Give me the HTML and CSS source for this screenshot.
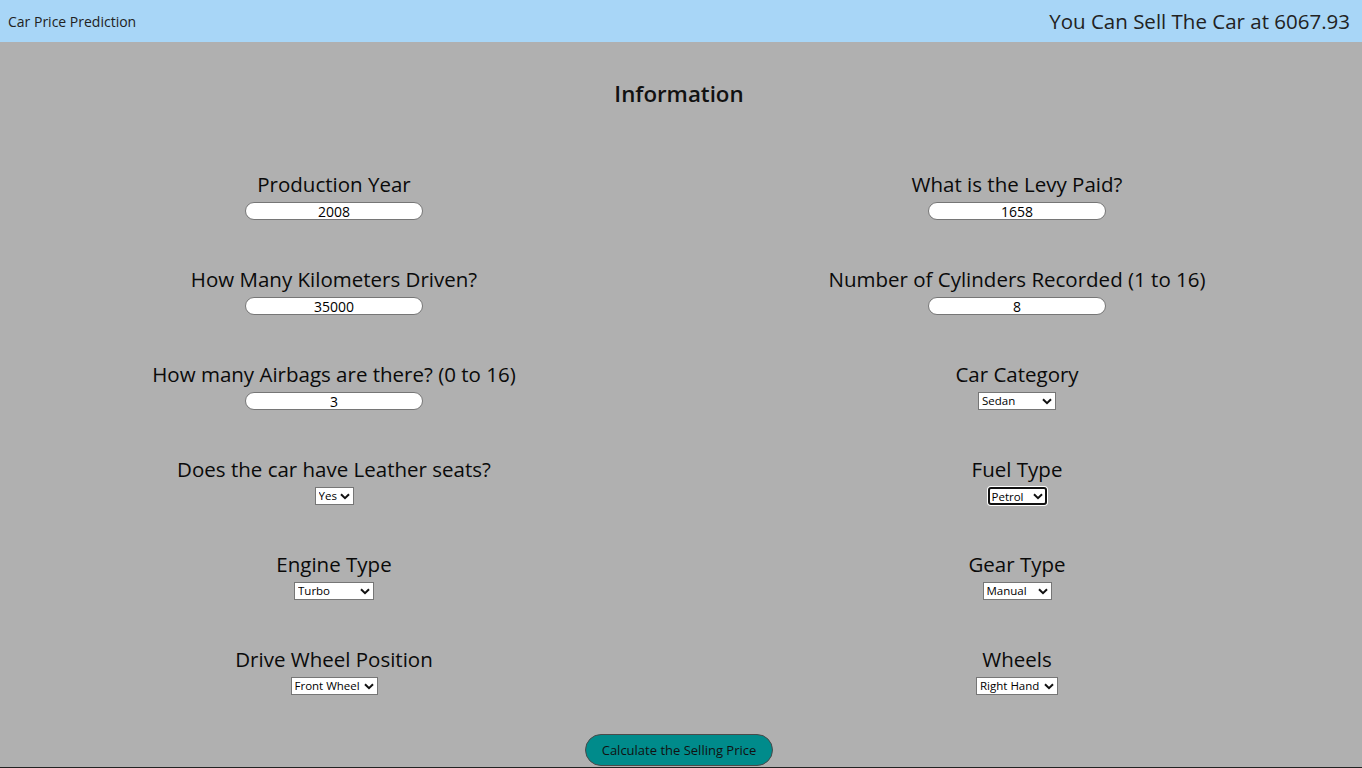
FILE: index.html
```html
<!DOCTYPE html>
<html lang="en">
<head>
<meta charset="utf-8">
<title>Car Price Prediction</title>
<link rel="stylesheet" href="styles.css">
</head>
<body>
<header class="topbar">
  <span class="brand">Car Price Prediction</span>
  <span class="result">You Can Sell The Car at 6067.93</span>
</header>
<main class="page">
  <h2 class="title">Information</h2>
  <form class="grid">
    <div class="field">
      <label>Production Year</label>
      <input class="num" type="text" value="2008">
    </div>
    <div class="field">
      <label>What is the Levy Paid?</label>
      <input class="num" type="text" value="1658">
    </div>
    <div class="field">
      <label>How Many Kilometers Driven?</label>
      <input class="num" type="text" value="35000">
    </div>
    <div class="field">
      <label>Number of Cylinders Recorded (1 to 16)</label>
      <input class="num" type="text" value="8">
    </div>
    <div class="field">
      <label>How many Airbags are there? (0 to 16)</label>
      <input class="num" type="text" value="3">
    </div>
    <div class="field">
      <label>Car Category</label>
      <select class="sel w-cat"><option>Sedan</option></select>
    </div>
    <div class="field">
      <label>Does the car have Leather seats?</label>
      <select class="sel w-yes"><option>Yes</option></select>
    </div>
    <div class="field">
      <label>Fuel Type</label>
      <select class="sel w-fuel focused"><option>Petrol</option></select>
    </div>
    <div class="field">
      <label>Engine Type</label>
      <select class="sel w-engine"><option>Turbo</option></select>
    </div>
    <div class="field">
      <label>Gear Type</label>
      <select class="sel w-gear"><option>Manual</option></select>
    </div>
    <div class="field">
      <label>Drive Wheel Position</label>
      <select class="sel w-drive"><option>Front Wheel</option></select>
    </div>
    <div class="field">
      <label>Wheels</label>
      <select class="sel w-wheels"><option>Right Hand</option></select>
    </div>
  </form>
  <div class="actions">
    <button class="calc" type="button">Calculate the Selling Price</button>
  </div>
</main>
</body>
</html>
```
FILE: styles.css
```css
* { box-sizing: border-box; }
html, body { margin: 0; padding: 0; }
body {
  background: #b0b0b0;
  font-family: "Open Sans", "Noto Sans", sans-serif;
  color: #111;
  height: 768px;
  overflow: hidden;
}
.topbar {
  height: 42px;
  background: #a8d6f7;
  display: flex;
  justify-content: space-between;
  align-items: center;
  padding: 0 12px 0 8px;
}
.brand { font-size: 14px; color: #222; }
.result { font-size: 20.5px; color: #222; }
.page {
  height: 726px;
  border-bottom: 1px solid #222;
  display: flex;
  flex-direction: column;
  padding-right: 4px;
}
.title {
  margin: 36px 0 0;
  font-size: 22.3px;
  line-height: 32px;
  font-weight: 600;
  text-align: center;
}
.grid {
  margin: 60px 0 0;
  padding-right: 7px;
  display: grid;
  grid-template-columns: 1fr 1fr;
  column-gap: 15px;
  row-gap: 45px;
}
.field {
  display: flex;
  flex-direction: column;
  align-items: center;
}
.field label {
  font-size: 20.5px;
  line-height: 28px;
  font-weight: 500;
  margin-bottom: 4px;
  color: #0a0a0a;
  white-space: nowrap;
}
.num {
  width: 178px;
  height: 18px;
  border: 1px solid #767676;
  border-radius: 9px;
  background: #fff;
  text-align: center;
  font-family: inherit;
  font-size: 14px;
  padding: 0;
  color: #000;
}
.sel {
  -webkit-appearance: none;
  appearance: none;
  height: 18px;
  font-family: inherit;
  font-size: 11.5px;
  line-height: 16px;
  border: 1px solid #767676;
  border-radius: 0;
  background-color: #fff;
  background-image: url("data:image/svg+xml,%3Csvg xmlns='http://www.w3.org/2000/svg' width='10' height='7' viewBox='0 0 10 7'%3E%3Cpath d='M1 1.2 L5 5.2 L9 1.2' fill='none' stroke='%23111' stroke-width='2'/%3E%3C/svg%3E");
  background-repeat: no-repeat;
  background-position: right 3px center;
  background-size: 10px 7px;
  color: #000;
  padding: 0 14px 0 3px;
}
.w-cat { width: 78px; }
.w-yes { width: 39px; }
.w-fuel { width: 59px; }
.w-engine { width: 80px; }
.w-gear { width: 69px; }
.w-drive { width: 87px; }
.w-wheels { width: 82px; }
.focused {
  border: 2px solid #111;
  border-radius: 3px;
  box-shadow: 0 0 0 1px #fff;
  outline: none;
  padding-left: 2px;
  background-position: right 2px center;
}
.actions {
  margin-top: 39px;
  display: flex;
  justify-content: center;
}
.calc {
  width: 188px;
  height: 32px;
  background: #008b8b;
  border: 1px solid #4a4a4a;
  border-radius: 16px;
  font-family: inherit;
  font-size: 13px;
  color: #111;
  padding: 0;
}
```
